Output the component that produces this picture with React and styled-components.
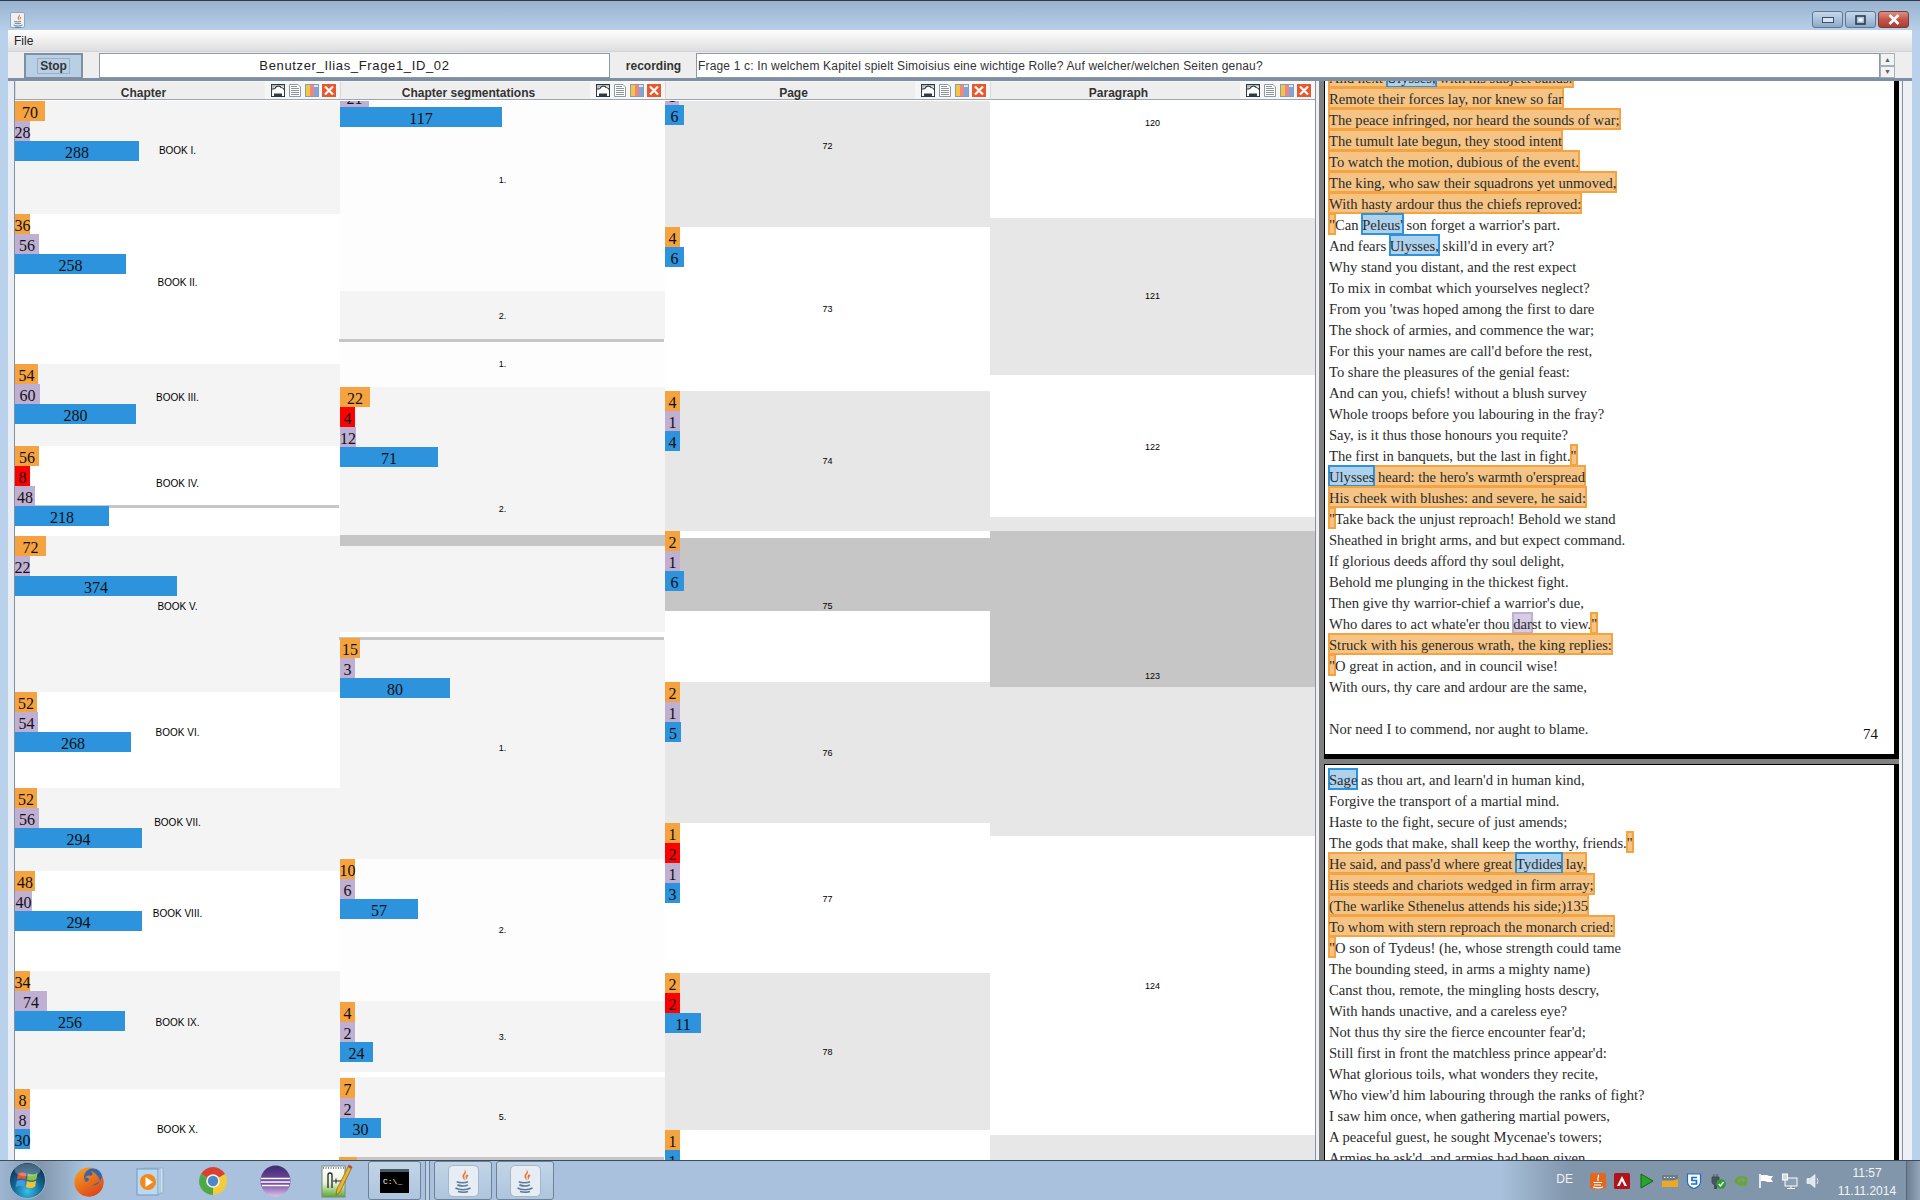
import React from 'react'
import styled, { createGlobalStyle } from 'styled-components'

const orange = '#f4a340'
const purple = '#bfafd3'
const blue = '#2c93dc'
const red = '#ff0000'

const toneColors = { o: orange, p: purple, b: blue, r: red }
const rowColors = {
    white: '#ffffff',
    soft: '#f4f4f4',
    faint: '#fdfdfd',
    page: '#e7e7e7',
    sel: '#c6c6c6',
}

// h: row height, y: label offset from the row top, shift: bars start above/below the row top
const chapterRows = [
    { h: 113, bg: 'soft', label: 'BOOK I.', y: 43, bars: [['o', 70, 30], ['p', 28, 15], ['b', 288, 124]] },
    { h: 150, bg: 'white', label: 'BOOK II.', y: 62, bars: [['o', 36, 15], ['p', 56, 24], ['b', 258, 111]] },
    { h: 82, bg: 'soft', label: 'BOOK III.', y: 27, bars: [['o', 54, 23], ['p', 60, 25], ['b', 280, 121]] },
    { h: 90, bg: 'white', label: 'BOOK IV.', y: 31, rule: 59, bars: [['o', 56, 24], ['r', 8, 15], ['p', 48, 20], ['b', 218, 94]] },
    { h: 156, bg: 'soft', label: 'BOOK V.', y: 64, bars: [['o', 72, 31], ['p', 22, 15], ['b', 374, 162]] },
    { h: 96, bg: 'white', label: 'BOOK VI.', y: 34, bars: [['o', 52, 22], ['p', 54, 23], ['b', 268, 116]] },
    { h: 83, bg: 'soft', label: 'BOOK VII.', y: 28, bars: [['o', 52, 22], ['p', 56, 24], ['b', 294, 127]] },
    { h: 100, bg: 'white', label: 'BOOK VIII.', y: 36, bars: [['o', 48, 20], ['p', 40, 17], ['b', 294, 127]] },
    { h: 118, bg: 'soft', label: 'BOOK IX.', y: 45, bars: [['o', 34, 15], ['p', 74, 32], ['b', 256, 110]] },
    { h: 80, bg: 'white', label: 'BOOK X.', y: 34, bars: [['o', 8, 15], ['p', 8, 15], ['b', 30, 15]] },
]

const segmentRows = [
    { h: 190, bg: 'faint', label: '1.', y: 72, shift: -14, bars: [['p', 21, 29], ['b', 117, 162]] },
    { h: 48, bg: 'soft', label: '2.', y: 18 },
    { h: 3, bg: 'sel', divider: true },
    { h: 45, bg: 'faint', label: '1.', y: 15 },
    { h: 148, bg: 'soft', label: '2.', y: 115, bars: [['o', 22, 30], ['r', 4, 15], ['p', 12, 16], ['b', 71, 98]] },
    { h: 11, bg: 'sel' },
    { h: 86, bg: 'soft' },
    { h: 5, bg: 'white' },
    { h: 3, bg: 'sel', divider: true },
    { h: 219, bg: 'soft', label: '1.', y: 101, shift: -2, bars: [['o', 15, 20], ['p', 3, 15], ['b', 80, 110]] },
    { h: 142, bg: 'faint', label: '2.', y: 64, bars: [['o', 10, 15], ['p', 6, 15], ['b', 57, 78]] },
    { h: 71, bg: 'soft', label: '3.', y: 29, shift: 1, bars: [['o', 4, 15], ['p', 2, 15], ['b', 24, 33]] },
    { h: 5, bg: 'white' },
    { h: 80, bg: 'soft', label: '5.', y: 33, shift: 1, bars: [['o', 7, 15], ['p', 2, 15], ['b', 30, 41]] },
    { h: 3, bg: 'sel', divider: true, bars: [['o', '', 18]] },
]

const pageRows = [
    { h: 126, bg: 'page', label: '72', y: 38, shift: -16, bars: [['p', 1, 14], ['b', 6, 19]] },
    { h: 164, bg: 'white', label: '73', y: 75, bars: [['o', 4, 15], ['b', 6, 19]] },
    { h: 140, bg: 'page', label: '74', y: 63, bars: [['o', 4, 15], ['p', 1, 15], ['b', 4, 15]] },
    { h: 7, bg: 'white' },
    { h: 73, bg: 'sel', label: '75', y: 61, shift: -7, bars: [['o', 2, 15], ['p', 1, 15], ['b', 6, 19]] },
    { h: 71, bg: 'white' },
    { h: 141, bg: 'page', label: '76', y: 64, bars: [['o', 2, 15], ['p', 1, 15], ['b', 5, 16]] },
    { h: 150, bg: 'white', label: '77', y: 69, bars: [['o', 1, 15], ['r', 2, 15], ['p', 1, 15], ['b', 3, 15]] },
    { h: 157, bg: 'page', label: '78', y: 72, bars: [['o', 2, 15], ['r', 2, 15], ['b', 11, 36]] },
    { h: 40, bg: 'white', bars: [['o', 1, 15], ['b', 1, 15]] },
]

const paragraphRows = [
    { h: 117, bg: 'white', label: '120', y: 15 },
    { h: 157, bg: 'page', label: '121', y: 71 },
    { h: 142, bg: 'white', label: '122', y: 65 },
    { h: 14, bg: 'page' },
    { h: 156, bg: 'sel', label: '123', y: 138 },
    { h: 149, bg: 'page' },
    { h: 299, bg: 'white', label: '124', y: 143 },
    { h: 40, bg: 'page' },
]

const columns = [
    { title: 'Chapter', rows: chapterRows },
    { title: 'Chapter segmentations', rows: segmentRows },
    { title: 'Page', rows: pageRows },
    { title: 'Paragraph', rows: paragraphRows },
]

const HeaderIcons = () => (
    <IconGroup>
        <svg width="14" height="13" viewBox="0 0 14 13">
            <rect x="0.5" y="0.5" width="13" height="12" fill="#fff" stroke="#2f3a44" />
            <path d="M.5 8 V5 C2 5 3 5 4 4.500 C4.500 2 9 1 10 3.500 C12 3.500 13 5 13.500 6" fill="none" stroke="#2f3a44" strokeWidth="1.200" />
            <path d="M.5 .5 H13.500 V3 C12 2 10.500 2 10 2.500 C8 .8 4.500 1.500 3.500 3.500 C2.500 3.500 1.500 3.700 .5 4.200 Z" fill="#2f3a44" opacity="0.35" />
            <rect x="3" y="9.500" width="8" height="2.500" fill="#2f3a44" />
        </svg>
        <svg width="14" height="13" viewBox="0 0 14 13">
            <path d="M1.500 .5 H10 L12.500 3 V12.500 H1.500 Z" fill="#fff" stroke="#8f9aa3" />
            <path d="M3 2.500 H9 M3 4.500 H11 M3 6.500 H11 M3 8.500 H11 M3 10.500 H11" stroke="#8a949c" />
        </svg>
        <svg width="14" height="13" viewBox="0 0 14 13">
            <rect x="0.5" y="0.5" width="13" height="12" fill="#dfe6ee" stroke="#8d9cab" />
            <rect x="1" y="1" width="4" height="11" fill="#f5c63f" />
            <rect x="5" y="1" width="4" height="11" fill="#ef8585" />
            <rect x="9" y="3" width="4" height="9" fill="#7ea6dc" />
        </svg>
        <svg width="14" height="13" viewBox="0 0 14 13">
            <rect width="14" height="13" fill="#e8582c" />
            <path d="M3 2.500 L11 10.500 M11 2.500 L3 10.500" stroke="#fff" strokeWidth="2.200" />
        </svg>
    </IconGroup>
)

const JavaCup = ({ size = 14 }) => (
    <svg width={size} height={size * 1.25} viewBox="0 0 16 20">
        <path d="M9 1 C11 4 6 5 8 8 C8.500 9 9 9.500 9 10 C10 8 8 6 10 4.500 C11 3.500 10 2 9 1 Z" fill="#e8762d" />
        <path d="M11 5 C9 7 11 8 10 10 C12 8 11 7 12.500 6 Z" fill="#e8762d" />
        <path d="M3 11 C5 12 10 12 12 11 M3.500 13.500 C6 14.500 10 14.500 12 13.500 M2 16 C5 17.800 11 17.800 14 16 M4 18.800 C7 19.500 10 19.500 12 18.800" fill="none" stroke="#5d7a96" strokeWidth="1.300" />
    </svg>
)

const StartOrb = () => (
    <svg width="37" height="37" viewBox="0 0 37 37">
        <defs>
            <radialGradient id="orb" cx="50%" cy="80%" r="75%">
                <stop offset="0%" stopColor="#35c2e8" />
                <stop offset="55%" stopColor="#14618f" />
                <stop offset="100%" stopColor="#0c2f4e" />
            </radialGradient>
        </defs>
        <circle cx="18.500" cy="18.500" r="18" fill="url(#orb)" stroke="#a9c4d8" strokeWidth="0.800" />
        <path d="M9 12 C12 10 14 10 17.500 11.500 L16.500 17.500 C13 16 11 16 8 17.500 Z" fill="#e8532c" />
        <path d="M19 11.500 C22 13 25 13 28.500 11 L27.500 17 C24 19 21 19 18 17.500 Z" fill="#8fc341" />
        <path d="M7.700 19 C11 17.500 13 17.500 16.200 19 L15.300 25 C12 23.500 10 23.500 6.800 25 Z" fill="#3f9be0" />
        <path d="M17.800 19 C21 20.500 24 20.500 27.200 18.500 L26.200 24.500 C23 26.500 20 26.500 17 25 Z" fill="#f7c02e" />
        <ellipse cx="18.500" cy="8" rx="13" ry="6.500" fill="#fff" opacity="0.25" />
    </svg>
)

const FirefoxIcon = () => (
    <svg width="30" height="32" viewBox="0 0 30 32">
        <defs>
            <linearGradient id="fox" x1="0" y1="0" x2="0.600" y2="1">
                <stop offset="0%" stopColor="#f8a51f" />
                <stop offset="100%" stopColor="#dd4a1b" />
            </linearGradient>
        </defs>
        <circle cx="15" cy="17" r="14.500" fill="url(#fox)" />
        <ellipse cx="19" cy="12" rx="9" ry="8.500" fill="#3766a8" />
        <path d="M8 2 C7 5 6 6 5 8 C1 11 0 16 1 21 C3 28 9 32 16 31.500 C23 31 29 26 29.500 18 C29.700 15 29 13 28 11 C28 14 27 15 26 16 C25 12 22 8 17 6 C19 8 19 10 17 11 C14 10 12 11 11 13 C13 12 15 13 15 15 C13 17 12 17 11 17 C12 20 16 21 19 20 C22 19 24 17 25 16 C25 21 21 27 15 27 C9 27 5 22 5 15 C5 10 7 6 8 2 Z" fill="url(#fox)" />
    </svg>
)

const MediaIcon = () => (
    <svg width="30" height="32" viewBox="0 0 30 32">
        <rect x="8" y="3" width="19" height="25" fill="#cfe2f2" stroke="#8fb0cc" />
        <rect x="5" y="4" width="19" height="25" fill="#dcebf7" stroke="#8fb0cc" />
        <rect x="1" y="4" width="21" height="26" fill="#bcd8ee" stroke="#6b9cc4" />
        <circle cx="12" cy="17" r="8" fill="#f08a1d" />
        <path d="M9.500 12 L17 17 L9.500 22 Z" fill="#fff" />
    </svg>
)

const ChromeIcon = () => (
    <svg width="30" height="30" viewBox="0 0 30 30">
        <path d="M15 15 L2.900 8 A14 14 0 0 1 27.100 8 Z" fill="#d8402f" />
        <path d="M15 15 L15 29 A14 14 0 0 1 2.900 8 Z" fill="#4da845" />
        <path d="M15 15 L27.100 8 A14 14 0 0 1 15 29 Z" fill="#f4cb3a" />
        <circle cx="15" cy="15" r="6.800" fill="#f2f2f2" />
        <circle cx="15" cy="15" r="5.200" fill="#4d86c9" />
    </svg>
)

const EclipseIcon = () => (
    <svg width="31" height="32" viewBox="0 0 31 32">
        <defs>
            <linearGradient id="ecl" x1="0" y1="0" x2="0" y2="1">
                <stop offset="0%" stopColor="#3c2a6e" />
                <stop offset="60%" stopColor="#7d52a8" />
                <stop offset="100%" stopColor="#d9c2ea" />
            </linearGradient>
        </defs>
        <ellipse cx="15.500" cy="16" rx="15" ry="15.500" fill="url(#ecl)" />
        <path d="M1 13.500 H30 M.8 17 H30.200 M2 20.500 H29" stroke="#fff" strokeWidth="1.500" />
    </svg>
)

const NotepadIcon = () => (
    <svg width="32" height="36" viewBox="0 0 32 36">
        <defs>
            <linearGradient id="npp" x1="0" y1="0" x2="0" y2="1">
                <stop offset="0%" stopColor="#ffffff" />
                <stop offset="55%" stopColor="#e8f3dc" />
                <stop offset="100%" stopColor="#5aa82c" />
            </linearGradient>
        </defs>
        <rect x="1" y="3" width="23" height="31" fill="url(#npp)" stroke="#7d8a72" />
        <path d="M2 5 H23" stroke="#88a" strokeDasharray="1 1.500" strokeWidth="2" />
        <path d="M7 25 V12 Q7 10 9 10 Q11 10 11 12 V25" fill="none" stroke="#222" strokeWidth="1.300" />
        <path d="M12 18 H18 M15 15.500 V20.500 M18 18 H24" stroke="#222" strokeWidth="1" />
        <path d="M28 2 L31 4 L19 29 L15 32 L16 26 Z" fill="#f0b429" stroke="#7a5a1c" strokeWidth="0.700" />
        <path d="M28 2 L31 4 L30 6 L27 4 Z" fill="#c8433a" />
    </svg>
)

const TrayIcons = () => (
    <>
        <svg width="16" height="16" viewBox="0 0 16 16">
            <rect width="16" height="16" rx="2" fill="#e2681f" />
            <path d="M8 2 C10 4 6 5 8.500 8 M3.500 9.500 H12 M4 12 H11 M3 14 C6 15 10 15 13 14" fill="none" stroke="#fff" strokeWidth="1.200" />
        </svg>
        <svg width="16" height="16" viewBox="0 0 16 16">
            <rect width="16" height="16" rx="1.500" fill="#b4121b" />
            <path d="M8 3 L3 13 H5.500 L8 8 L10.500 13 H13 Z" fill="#fff" />
        </svg>
        <svg width="16" height="16" viewBox="0 0 16 16">
            <path d="M3 1 L15 8 L3 15 Z" fill="#2aa52a" stroke="#14631a" />
        </svg>
        <svg width="16" height="16" viewBox="0 0 16 16">
            <rect y="2" width="16" height="5" fill="#6e7b88" />
            <path d="M2 4.500 H14" stroke="#dfe6ec" strokeDasharray="1.500 1.500" />
            <path d="M0 8 H10 L16 6 V14 H0 Z" fill="#f0a820" />
        </svg>
        <svg width="16" height="16" viewBox="0 0 16 16">
            <path d="M1.500 1 H14.500 V9 C14.500 12 11 14.500 8 15.500 C5 14.500 1.500 12 1.500 9 Z" fill="#fff" stroke="#1c6fc4" strokeWidth="1.200" />
            <path d="M11 4.500 H6 V7.500 H10.500 V11 H5" fill="none" stroke="#1c6fc4" strokeWidth="1.700" />
        </svg>
        <svg width="16" height="16" viewBox="0 0 16 16">
            <path d="M4 1 V4 M7 1 V4 M2 4 H9 V9 C9 11 7 11 6.500 12 V16 H4.500 V12 C4 11 2 11 2 9 Z" fill="#4a5460" stroke="#3a4450" strokeWidth="0.800" />
            <circle cx="11" cy="11" r="4.800" fill="#2f9c2f" />
            <path d="M8.800 11 L10.500 13 L13.500 9" fill="none" stroke="#fff" strokeWidth="1.400" />
        </svg>
        <svg width="16" height="16" viewBox="0 0 16 16">
            <path d="M0 8 C3 3 8 2 13 4 V12 C9 14 3 13 0 8 Z" fill="#6aa52c" />
            <path d="M3 8 C6 5 9 5 11 7 C9 10 6 10 3 8 Z" fill="#8396ab" />
            <circle cx="7" cy="7.800" r="1.200" fill="#6aa52c" />
        </svg>
        <svg width="16" height="16" viewBox="0 0 16 16">
            <path d="M2 1 V15" stroke="#fff" strokeWidth="1.600" />
            <path d="M3 2 H9 L11 3 H15 L13 6 L15 9 H9 L7 8 H3 Z" fill="#fff" />
        </svg>
        <svg width="16" height="16" viewBox="0 0 16 16">
            <rect x="3" y="5" width="12" height="8" fill="#88a0b8" stroke="#fff" />
            <rect x="0.500" y="1" width="5" height="6" fill="#cfd9e2" stroke="#fff" />
            <path d="M9 13 V15 M5 15.500 H13" stroke="#fff" />
        </svg>
        <svg width="16" height="16" viewBox="0 0 16 16">
            <path d="M1 5.500 H4 L9 1.500 V14.500 L4 10.500 H1 Z" fill="#dfe6ec" stroke="#fff" strokeWidth="0.600" />
            <path d="M11 5 Q13 8 11 11" fill="none" stroke="#dfe6ec" />
        </svg>
    </>
)

const BarStack = ({ bars, shift }) => (
    <Bars $shift={shift || 0}>
        {bars.map(([tone, value, width], i) => (
            <Bar key={i} $tone={tone} $w={width}>{value}</Bar>
        ))}
    </Bars>
)

const TreeColumn = ({ title, rows }) => (
    <Column>
        <ColumnHeader>
            <ColumnTitle>{title}</ColumnTitle>
            <HeaderIcons />
        </ColumnHeader>
        <ColumnBody>
            {rows.map((row, i) => (
                <Row key={i} $h={row.h} $bg={row.bg} $divider={row.divider}>
                    {row.rule && <RowRule $top={row.rule} />}
                    {row.label && <RowLabel $top={row.y} $book={row.label.startsWith('BOOK')}>{row.label}</RowLabel>}
                    {row.bars && <BarStack bars={row.bars} shift={row.shift} />}
                </Row>
            ))}
        </ColumnBody>
    </Column>
)

const App = () => {
    return (
        <Screen>
            <GlobalStyle />
            <Window>
                <TitleBar>
                    <AppIcon><JavaCup size={12} /></AppIcon>
                    <WindowButtons>
                        <WinButton>
                            <svg width="12" height="6" viewBox="0 0 12 6"><rect x="0.500" y="0.500" width="11" height="5" fill="#d9e4ef" stroke="#3d4f63" /></svg>
                        </WinButton>
                        <WinButton>
                            <svg width="11" height="10" viewBox="0 0 11 10"><rect x="1" y="1" width="9" height="8" fill="none" stroke="#2e3d4d" strokeWidth="1.600" /><rect x="3.500" y="3.500" width="4" height="3" fill="#fff" /></svg>
                        </WinButton>
                        <CloseButton>
                            <svg width="12" height="11" viewBox="0 0 12 11"><path d="M1.500 1 L10.500 10 M10.500 1 L1.500 10" stroke="#fff" strokeWidth="2.600" /></svg>
                        </CloseButton>
                    </WindowButtons>
                </TitleBar>
                <MenuBar><MenuItem>File</MenuItem></MenuBar>
                <ToolBar>
                    <StopButton><StopFocus>Stop</StopFocus></StopButton>
                    <NameField>Benutzer_Ilias_Frage1_ID_02</NameField>
                    <RecordingLabel>recording</RecordingLabel>
                    <QuestionField>Frage 1 c: In welchem Kapitel spielt Simoisius eine wichtige Rolle? Auf welcher/welchen Seiten genau?</QuestionField>
                    <SpinBox>
                        <SpinArrow>▲</SpinArrow>
                        <SpinArrow>▼</SpinArrow>
                    </SpinBox>
                </ToolBar>
                <Main>
                    <Gutter />
                    {columns.map(col => (
                        <TreeColumn key={col.title} title={col.title} rows={col.rows} />
                    ))}
                    <ReaderPane>
                        <SplitPane>
                            <TopPage>
                                <Scrolled>
                                    <Line><Mark $tone="o">And next <Mark $tone="b">Ulysses,</Mark> with his subject bands:</Mark></Line>
                                    <Line><Mark $tone="o">Remote their forces lay, nor knew so far</Mark></Line>
                                    <Line><Mark $tone="o">The peace infringed, nor heard the sounds of war;</Mark></Line>
                                    <Line><Mark $tone="o">The tumult late begun, they stood intent</Mark></Line>
                                    <Line><Mark $tone="o">To watch the motion, dubious of the event.</Mark></Line>
                                    <Line><Mark $tone="o">The king, who saw their squadrons yet unmoved,</Mark></Line>
                                    <Line><Mark $tone="o">With hasty ardour thus the chiefs reproved:</Mark></Line>
                                    <Line><Mark $tone="o">"</Mark>Can <Mark $tone="b">Peleus'</Mark> son forget a warrior's part.</Line>
                                    <Line>And fears <Mark $tone="b">Ulysses,</Mark> skill'd in every art?</Line>
                                    <Line>Why stand you distant, and the rest expect</Line>
                                    <Line>To mix in combat which yourselves neglect?</Line>
                                    <Line>From you 'twas hoped among the first to dare</Line>
                                    <Line>The shock of armies, and commence the war;</Line>
                                    <Line>For this your names are call'd before the rest,</Line>
                                    <Line>To share the pleasures of the genial feast:</Line>
                                    <Line>And can you, chiefs! without a blush survey</Line>
                                    <Line>Whole troops before you labouring in the fray?</Line>
                                    <Line>Say, is it thus those honours you requite?</Line>
                                    <Line>The first in banquets, but the last in fight.<Mark $tone="o">"</Mark></Line>
                                    <Line><Mark $tone="o"><Mark $tone="b">Ulysses</Mark> heard: the hero's warmth o'erspread</Mark></Line>
                                    <Line><Mark $tone="o">His cheek with blushes: and severe, he said:</Mark></Line>
                                    <Line><Mark $tone="o">"</Mark>Take back the unjust reproach! Behold we stand</Line>
                                    <Line>Sheathed in bright arms, and but expect command.</Line>
                                    <Line>If glorious deeds afford thy soul delight,</Line>
                                    <Line>Behold me plunging in the thickest fight.</Line>
                                    <Line>Then give thy warrior-chief a warrior's due,</Line>
                                    <Line>Who dares to act whate'er thou <Mark $tone="p">dar</Mark>st to view.<Mark $tone="o">"</Mark></Line>
                                    <Line><Mark $tone="o">Struck with his generous wrath, the king replies:</Mark></Line>
                                    <Line><Mark $tone="o">"</Mark>O great in action, and in council wise!</Line>
                                    <Line>With ours, thy care and ardour are the same,</Line>
                                    <Line> </Line>
                                    <FootLine>
                                        <span>Nor need I to commend, nor aught to blame.</span>
                                        <PageNumber>74</PageNumber>
                                    </FootLine>
                                </Scrolled>
                            </TopPage>
                            <BottomPage>
                                <Line><Mark $tone="b">Sage</Mark> as thou art, and learn'd in human kind,</Line>
                                <Line>Forgive the transport of a martial mind.</Line>
                                <Line>Haste to the fight, secure of just amends;</Line>
                                <Line>The gods that make, shall keep the worthy, friends.<Mark $tone="o">"</Mark></Line>
                                <Line><Mark $tone="o">He said, and pass'd where great <Mark $tone="b">Tydides</Mark> lay,</Mark></Line>
                                <Line><Mark $tone="o">His steeds and chariots wedged in firm array;</Mark></Line>
                                <Line><Mark $tone="o">(The warlike Sthenelus attends his side;)135</Mark></Line>
                                <Line><Mark $tone="o">To whom with stern reproach the monarch cried:</Mark></Line>
                                <Line><Mark $tone="o">"</Mark>O son of Tydeus! (he, whose strength could tame</Line>
                                <Line>The bounding steed, in arms a mighty name)</Line>
                                <Line>Canst thou, remote, the mingling hosts descry,</Line>
                                <Line>With hands unactive, and a careless eye?</Line>
                                <Line>Not thus thy sire the fierce encounter fear'd;</Line>
                                <Line>Still first in front the matchless prince appear'd:</Line>
                                <Line>What glorious toils, what wonders they recite,</Line>
                                <Line>Who view'd him labouring through the ranks of fight?</Line>
                                <Line>I saw him once, when gathering martial powers,</Line>
                                <Line>A peaceful guest, he sought Mycenae's towers;</Line>
                                <Line>Armies he ask'd, and armies had been given,</Line>
                            </BottomPage>
                        </SplitPane>
                        <ScrollGutter />
                    </ReaderPane>
                </Main>
            </Window>
            <TaskBar>
                <QuickLaunch>
                    <LaunchSlot><StartOrb /></LaunchSlot>
                    <LaunchSlot><FirefoxIcon /></LaunchSlot>
                    <LaunchSlot><MediaIcon /></LaunchSlot>
                    <LaunchSlot><ChromeIcon /></LaunchSlot>
                    <LaunchSlot><EclipseIcon /></LaunchSlot>
                    <LaunchSlot><NotepadIcon /></LaunchSlot>
                </QuickLaunch>
                <TaskButton $w={53}><ConsoleGlyph>C:\_</ConsoleGlyph></TaskButton>
                <TaskSeparator />
                <TaskButton $w={58}><JavaTile><JavaCup size={20} /></JavaTile></TaskButton>
                <TaskButton $w={58} $gap={4}><JavaTile><JavaCup size={20} /></JavaTile></TaskButton>
                <Tray>
                    <Language>DE</Language>
                    <TrayIconRow><TrayIcons /></TrayIconRow>
                    <Clock>
                        <span>11:57</span>
                        <span>11.11.2014</span>
                    </Clock>
                    <ShowDesktop />
                </Tray>
            </TaskBar>
        </Screen>
    )
}

export default App

const GlobalStyle = createGlobalStyle`
    html, body {
        margin: 0;
        padding: 0;
        width: 1920px;
        height: 1200px;
        overflow: hidden;
        background: #a9c1dc;
    }
    * {
        box-sizing: border-box;
    }
`

const Screen = styled.div`
    display: flex;
    flex-direction: column;
    width: 1920px;
    height: 1200px;
    font-family: 'Liberation Sans', Arial, sans-serif;
`

const Window = styled.div`
    display: flex;
    flex-direction: column;
    height: 1160px;
    overflow: hidden;
    padding: 0 8px;
    background: #b9d1ea;
`

const TitleBar = styled.div`
    flex: none;
    display: flex;
    justify-content: space-between;
    height: 30px;
    margin: 0 -8px;
    padding: 10px 11px 0 10px;
    border-top: 1px solid #2e3a48;
    background: linear-gradient(#98b2cf, #b7cfe8);
`

const AppIcon = styled.div`
    display: flex;
    align-items: center;
    justify-content: center;
    width: 15px;
    height: 16px;
    margin-top: 1px;
    border-radius: 2px;
    background: #eef2f6;
    border: 1px solid #94a6b8;
`

const WindowButtons = styled.div`
    display: flex;
    gap: 2px;
    height: 17px;
`

const WinButton = styled.div`
    display: flex;
    align-items: center;
    justify-content: center;
    width: 31px;
    border: 1px solid #5f7690;
    border-radius: 3px;
    background: linear-gradient(#c6d8ea, #a9c2dc 50%, #8ea9c6);
`

const CloseButton = styled(WinButton)`
    border-color: #7a3a36;
    background: linear-gradient(#dc8f84, #c4554a 50%, #b03c34);
`

const MenuBar = styled.div`
    flex: none;
    display: flex;
    align-items: center;
    height: 22px;
    padding-left: 6px;
    background: linear-gradient(#ffffff, #dedede);
    border-bottom: 1px solid #cfd3d7;
`

const MenuItem = styled.span`
    font-size: 12px;
    color: #222;
`

const ToolBar = styled.div`
    flex: none;
    display: flex;
    height: 26px;
    padding: 1px 17px 0 16px;
    background: #eeeeee;
`

const StopButton = styled.div`
    flex: none;
    display: flex;
    align-items: center;
    justify-content: center;
    width: 59px;
    margin-right: 16px;
    background: #b8cfe6;
    border: 2px solid #7d8fa1;
    border-bottom-width: 1px;
`

const StopFocus = styled.div`
    padding: 0 2px;
    border: 1px solid #9db0c3;
    font-size: 12px;
    font-weight: 700;
    line-height: 14px;
    color: #333;
`

const NameField = styled.div`
    flex: none;
    display: flex;
    align-items: center;
    justify-content: center;
    width: 511px;
    background: #fff;
    border: 1px solid #8b98a5;
    font-size: 13px;
    letter-spacing: 0.65px;
    color: #222;
`

const RecordingLabel = styled.div`
    flex: none;
    display: flex;
    align-items: center;
    justify-content: center;
    width: 86px;
    padding-left: 1px;
    font-size: 12px;
    font-weight: 700;
    color: #333;
`

const QuestionField = styled.div`
    flex: 1;
    display: flex;
    align-items: center;
    padding-left: 1px;
    background: #fff;
    border: 1px solid #8b98a5;
    font-size: 12px;
    letter-spacing: 0.17px;
    color: #333;
`

const SpinBox = styled.div`
    flex: none;
    display: flex;
    flex-direction: column;
    width: 15px;
`

const SpinArrow = styled.div`
    flex: 1;
    display: flex;
    align-items: center;
    justify-content: center;
    border: 1px solid #a4b0bc;
    background: #f3f3f3;
    font-size: 7px;
    color: #55626f;
`

const Main = styled.div`
    flex: 1;
    min-height: 0;
    display: flex;
    overflow: hidden;
    border-top: 3px solid #7d8fa1;
    background: #fff;
`

const Gutter = styled.div`
    flex: none;
    width: 7px;
    background: #e9eef4;
    border-right: 1px solid #87919c;
`

const Column = styled.div`
    flex: none;
    display: flex;
    flex-direction: column;
    width: 325px;
`

const ColumnHeader = styled.div`
    flex: none;
    display: flex;
    height: 19px;
    margin-bottom: 1px;
    background: #eeeeee;
    border-top: 1px solid #f7f7f7;
    border-left: 1px solid #d4d9de;
    border-bottom: 1px solid #9aa6b2;
`

const ColumnTitle = styled.div`
    flex: 1;
    padding-left: 6px;
    text-align: center;
    font-size: 12px;
    font-weight: 700;
    line-height: 23px;
    color: #333;
`

const IconGroup = styled.div`
    flex: none;
    display: flex;
    gap: 3px;
    height: 17px;
    padding: 2px 4px 0 6px;
    background: #f6f6f6;
`

const ColumnBody = styled.div`
    flex: 1;
    min-height: 0;
    overflow-x: visible;
    overflow-y: clip;
`

const Row = styled.div`
    display: grid;
    grid-template: minmax(0, 1fr) / minmax(0, 1fr);
    height: ${p => p.$h}px;
    background: ${p => rowColors[p.$bg]};
    margin: ${p => (p.$divider ? '0 1px 0 -1px' : '0')};
`

const RowRule = styled.div`
    grid-area: 1 / 1;
    align-self: start;
    height: 3px;
    margin: ${p => p.$top}px 1px 0 0;
    background: #c6c6c6;
`

const RowLabel = styled.div`
    grid-area: 1 / 1;
    align-self: start;
    justify-self: center;
    margin-top: ${p => p.$top + 1}px;
    font-size: ${p => (p.$book ? 10 : 9)}px;
    line-height: 12px;
    color: #000;
`

const Bars = styled.div`
    grid-area: 1 / 1;
    align-self: start;
    display: flex;
    flex-direction: column;
    align-items: flex-start;
    margin-top: ${p => p.$shift}px;
`

const Bar = styled.div`
    display: flex;
    justify-content: center;
    width: ${p => p.$w}px;
    height: 20px;
    background: ${p => toneColors[p.$tone]};
    font-family: 'Liberation Serif', 'Times New Roman', serif;
    font-size: 16px;
    line-height: 23px;
    white-space: nowrap;
    color: #111;
`

const ReaderPane = styled.div`
    flex: 1;
    min-width: 0;
    display: flex;
    padding-left: 3px;
    background: #edf0f4;
    border-left: 1px solid #87919c;
`

const SplitPane = styled.div`
    flex: none;
    display: flex;
    flex-direction: column;
    width: 580px;
    margin-right: 3px;
    padding-left: 5px;
    background: #808080;
`

const TopPage = styled.div`
    flex: none;
    height: 678px;
    overflow: hidden;
    background: #fff;
    border-left: 1px solid #000;
    border-right: 5px solid #000;
    border-bottom: 5px solid #000;
`

const Scrolled = styled.div`
    margin-top: -14px;
`

const BottomPage = styled.div`
    flex: 1;
    min-height: 0;
    overflow: hidden;
    margin-top: 5px;
    padding-top: 4px;
    background: #fff;
    border-top: 1px solid #000;
    border-left: 1px solid #000;
    border-right: 5px solid #000;
`

const ScrollGutter = styled.div`
    flex: 1;
    border-left: 1px solid #87919c;
`

const Line = styled.div`
    height: 21px;
    padding-left: 4px;
    font-family: 'Liberation Serif', 'Times New Roman', serif;
    font-size: 14.6px;
    line-height: 23px;
    white-space: pre;
    color: #2b2b2b;
`

const FootLine = styled(Line)`
    display: flex;
    justify-content: space-between;
    padding-right: 16px;
`

const PageNumber = styled.span`
    margin-top: 5px;
    font-size: 15px;
    color: #111;
`

const Mark = styled.span`
    display: inline-block;
    vertical-align: top;
    height: 22px;
    margin: -1px -1px 0;
    padding: 0 1px;
    line-height: 25px;
    background: ${p => ({ o: '#f5c484', b: '#aed1ec', p: '#d6cce6' }[p.$tone])};
    box-shadow: inset 0 0 0 2px ${p => toneColors[p.$tone]};

    & & {
        margin-top: 0;
    }
`

const TaskBar = styled.div`
    flex: none;
    display: flex;
    height: 40px;
    border-top: 1px solid #3d4c5c;
    background: linear-gradient(90deg, #9eb6d1 0, #8297ae 40px, #a9c1dc 85px, #a9c1dc 1500px, #8195ab 1570px);
`

const QuickLaunch = styled.div`
    flex: none;
    display: flex;
    margin-left: -4px;
`

const LaunchSlot = styled.div`
    display: flex;
    align-items: center;
    justify-content: center;
    width: 62px;
`

const TaskButton = styled.div`
    flex: none;
    display: flex;
    align-items: center;
    justify-content: center;
    width: ${p => p.$w}px;
    margin-left: ${p => p.$gap || 0}px;
    background: linear-gradient(#c3d5e8, #adc5de);
    border: 1px solid #6e8196;
    border-radius: 3px;
`

const TaskSeparator = styled.div`
    flex: none;
    width: 5px;
    margin: 0 4px;
    border-left: 1px solid #6e8196;
    border-right: 1px solid #6e8196;
    background: #bcd0e5;
`

const ConsoleGlyph = styled.div`
    width: 29px;
    height: 24px;
    padding: 5px 0 0 3px;
    border-top: 3px solid #4a5a68;
    background: #000;
    font-family: 'Liberation Mono', monospace;
    font-size: 8px;
    line-height: 9px;
    color: #fff;
`

const JavaTile = styled.div`
    display: flex;
    align-items: center;
    justify-content: center;
    width: 31px;
    height: 32px;
    background: #e6edf4;
    border: 1px solid #a5b6c7;
    border-radius: 5px;
`

const Tray = styled.div`
    flex: 1;
    display: flex;
    justify-content: flex-end;
    align-items: center;
`

const Language = styled.span`
    margin: 0 17px 3px 0;
    font-size: 12px;
    color: #eef3f8;
`

const TrayIconRow = styled.div`
    display: flex;
    gap: 8px;
`

const Clock = styled.div`
    display: flex;
    flex-direction: column;
    align-items: center;
    gap: 4px;
    width: 58px;
    margin: 0 10px 0 16px;
    padding-top: 2px;
    font-size: 12px;
    line-height: 14px;
    color: #f2f5f9;
`

const ShowDesktop = styled.div`
    align-self: stretch;
    width: 14px;
    background: linear-gradient(90deg, #6d7f92, #93a5b8);
    border-left: 1px solid #55667a;
`
